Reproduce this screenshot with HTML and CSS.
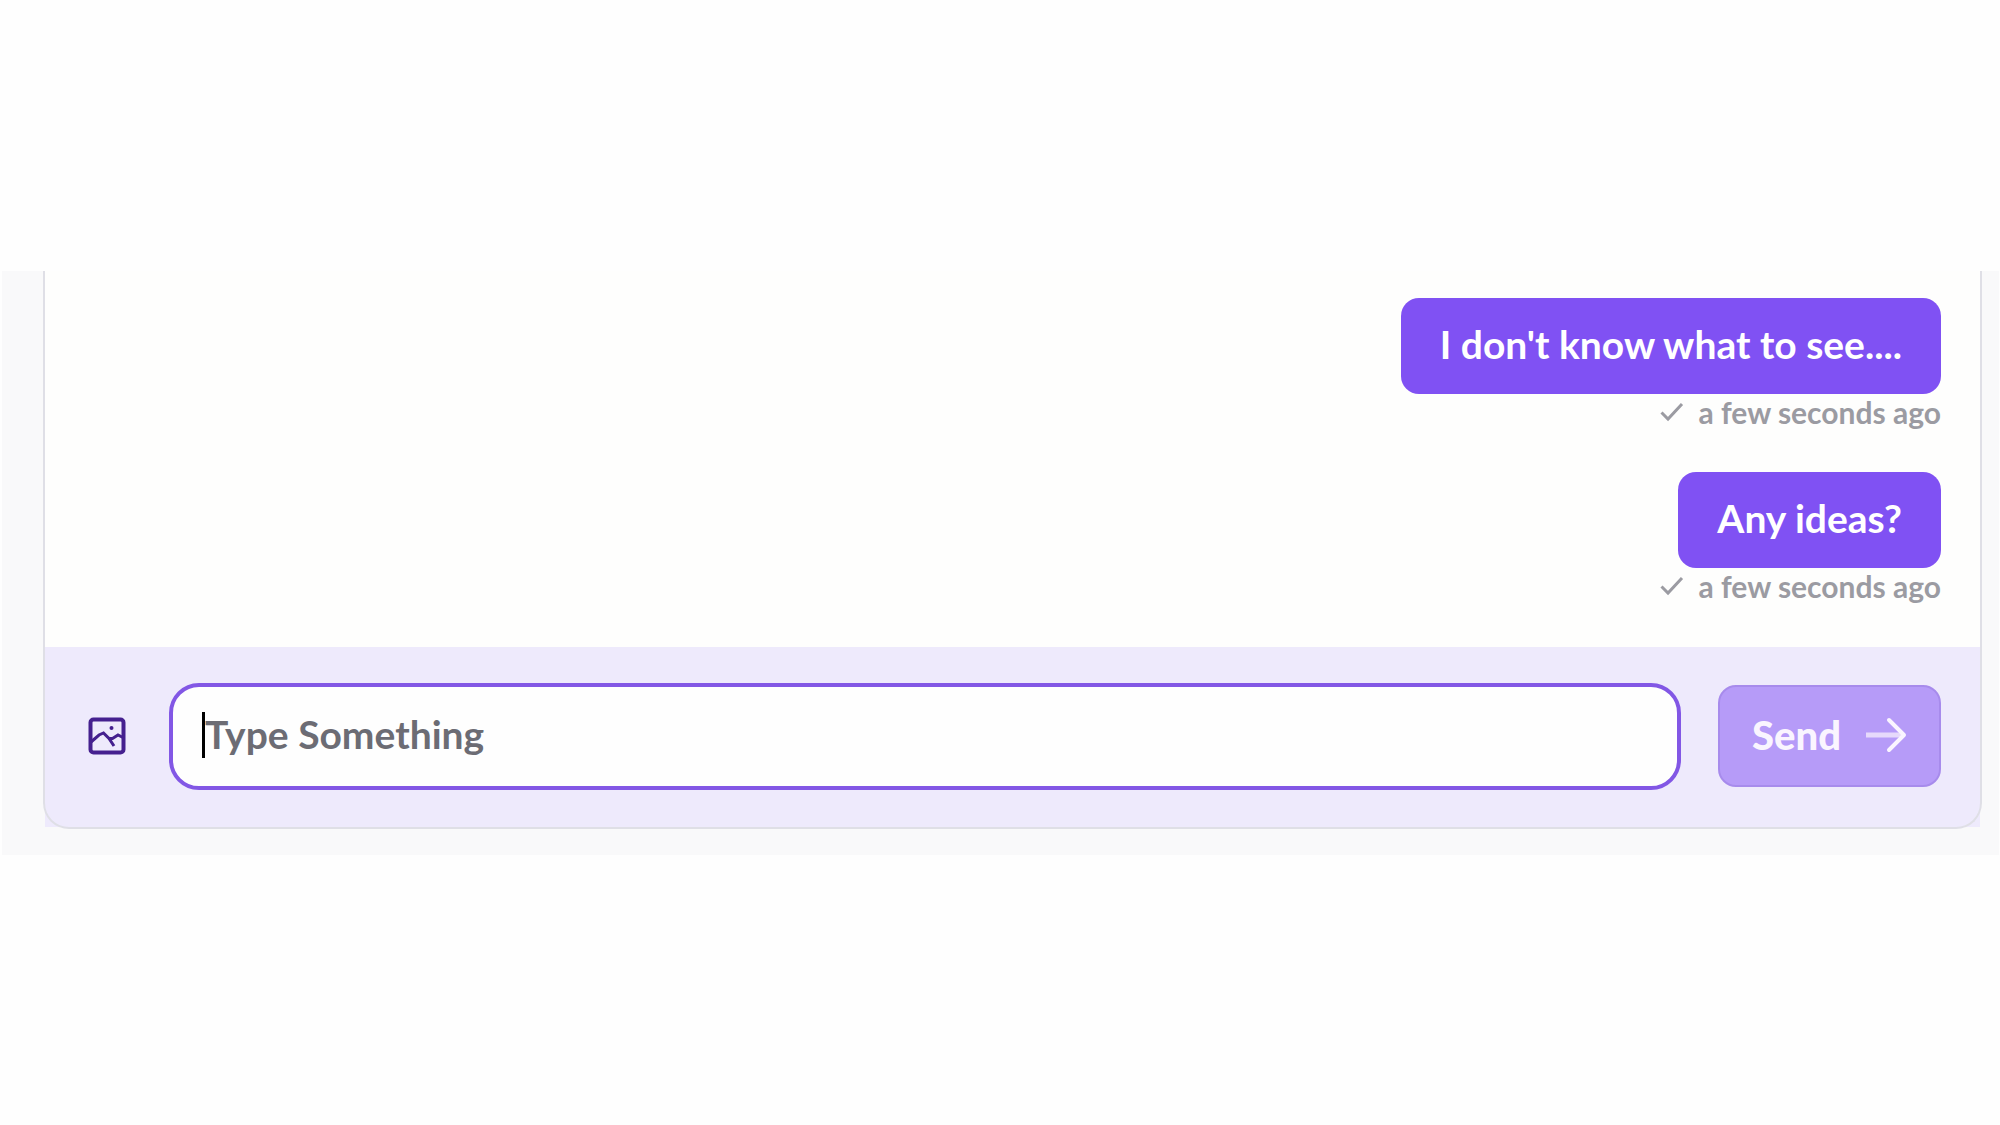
FILE: index.html
```html
<!DOCTYPE html>
<html lang="en">
<head>
  <meta charset="utf-8">
  <meta name="viewport" content="width=device-width, initial-scale=1">
  <title>Chat</title>
  <link rel="stylesheet" href="styles.css">
</head>
<body>
  <main class="stage">
    <section class="chat">
      <div class="messages">
        <article class="message">
          <p class="bubble">I don't know what to see....</p>
          <p class="meta">
            <svg class="check" viewBox="0 0 24 20" aria-hidden="true"><path d="M1.500 10.500L8 17L22 2"/></svg>
            <time>a few seconds ago</time>
          </p>
        </article>
        <article class="message">
          <p class="bubble">Any ideas?</p>
          <p class="meta">
            <svg class="check" viewBox="0 0 24 20" aria-hidden="true"><path d="M1.500 10.500L8 17L22 2"/></svg>
            <time>a few seconds ago</time>
          </p>
        </article>
      </div>
      <form class="composer">
        <button class="attach" type="button" aria-label="Attach image">
          <svg viewBox="0 0 38 38" aria-hidden="true">
            <rect x="2.500" y="2.500" width="33" height="33" rx="3"/>
            <path class="ridge" d="M3 25L11 18L15.500 16L21 21.500L26 29M21 21.500L24.500 21.500L30 18L35 20.500"/>
            <circle cx="23.500" cy="11" r="2"/>
          </svg>
        </button>
        <div class="field">
          <input class="field-input" type="text" placeholder="Type Something" aria-label="Message">
          <span class="caret"></span>
        </div>
        <button class="send" type="submit">
          <span>Send</span>
          <svg class="arrow" viewBox="0 0 42 36" aria-hidden="true"><path class="shaft" d="M1 18H38"/><path d="M24 3L39 18L24 33"/></svg>
        </button>
      </form>
    </section>
  </main>
</body>
</html>
```
FILE: styles.css
```css
* {
  box-sizing: border-box;
}

body {
  margin: 0;
  min-height: 100vh;
  display: flex;
  flex-direction: column;
  justify-content: center;
  background: #fefefe;
  font-family: Lato, "Liberation Sans", sans-serif;
}

p {
  margin: 0;
}

.stage {
  margin: 0 1px 0 2px;
  padding: 0 17px 26px 41px;
  background: #f9f9fa;
}

.chat {
  position: relative;
  padding: 0 2px 2px;
  background: #fefefd;
  border-radius: 0 0 26px 26px;
}

/* The outline is drawn over the square corners of the composer. */
.chat::after {
  content: "";
  position: absolute;
  inset: 0;
  border: solid #dfdfe6;
  border-width: 0 2px 2px;
  border-radius: 0 0 26px 26px;
  pointer-events: none;
}

.messages {
  display: flex;
  flex-direction: column;
  align-items: flex-end;
  gap: 42px;
  padding: 27px 39px 43px;
}

.message {
  display: flex;
  flex-direction: column;
  align-items: flex-end;
}

.bubble {
  padding: 22px 39px 26px;
  border-radius: 18px;
  background: #8051f3;
  color: #fff;
  font-size: 39px;
  font-weight: 700;
  line-height: 48px;
}

.meta {
  display: flex;
  align-items: center;
  gap: 14px;
  color: #9b9ba2;
  font-size: 30px;
  font-weight: 700;
  line-height: 36px;
}

.check {
  width: 24px;
  height: 20px;
  fill: none;
  stroke: currentColor;
  stroke-width: 3;
}

.composer {
  display: flex;
  align-items: center;
  gap: 37px;
  padding: 36px 39px 37px 43px;
  background: #eeeafc;
}

.attach {
  display: flex;
  margin-right: 6px;
  padding: 0;
  border: 0;
  background: none;
}

.attach svg {
  width: 38px;
  height: 38px;
  fill: none;
  stroke: #45208f;
  stroke-width: 4;
}

.attach .ridge {
  stroke-width: 3;
}

.attach circle {
  fill: #45208f;
  stroke: none;
}

.field {
  position: relative;
  flex: 1;
}

.field-input {
  display: block;
  width: 100%;
  height: 107px;
  padding: 0 32px 4px;
  border: 4px solid #8257e5;
  border-radius: 30px;
  outline: none;
  background: #fefefe;
  color: #25252d;
  font: 700 39px Lato, "Liberation Sans", sans-serif;
}

.field-input::placeholder {
  color: #6c6c74;
  opacity: 1;
}

.caret {
  position: absolute;
  top: 29px;
  left: 33px;
  width: 3px;
  height: 46px;
  background: #000;
}

.send {
  display: flex;
  align-items: center;
  gap: 24px;
  height: 102px;
  padding: 0 32px 2px;
  border: 2px solid #a78bec;
  border-radius: 18px;
  background: #b69bf8;
  color: #faf5ff;
  font: 900 40px Lato, "Liberation Sans", sans-serif;
}

.arrow {
  width: 42px;
  height: 36px;
  fill: none;
  stroke: #faf5ff;
  stroke-width: 4;
  stroke-linecap: round;
  stroke-linejoin: round;
}

.shaft {
  stroke: #e6d9fb;
  stroke-width: 5;
  stroke-linecap: butt;
}
```
